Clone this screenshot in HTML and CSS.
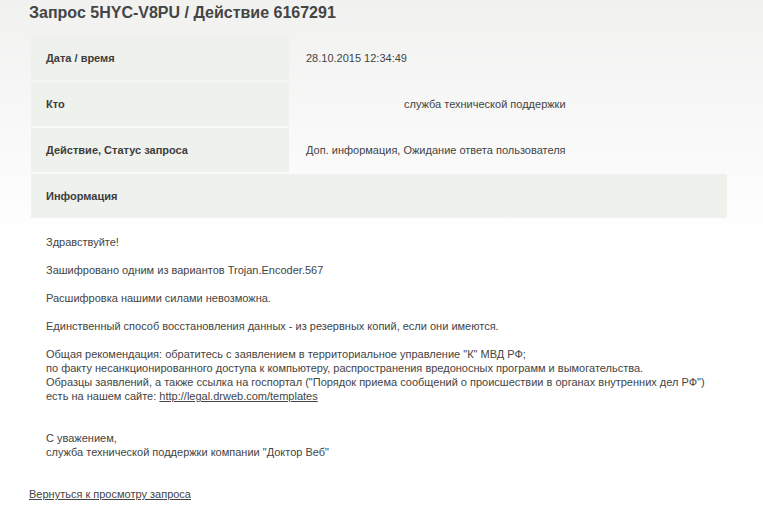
FILE: index.html
```html
<!DOCTYPE html>
<html lang="ru">
<head>
  <meta charset="UTF-8" />
  <title>Запрос 5HYC-V8PU / Действие 6167291</title>
  <link rel="stylesheet" href="styles.css">
</head>
<body>
  <div class="page">
    <h1 class="page-title">Запрос 5HYC-V8PU / Действие 6167291</h1>

    <table class="details">
      <tr>
        <th class="label">Дата / время</th>
        <td class="value">28.10.2015 12:34:49</td>
      </tr>
      <tr>
        <th class="label">Кто</th>
        <td class="value"><span class="who-name"></span>служба технической поддержки</td>
      </tr>
      <tr>
        <th class="label">Действие, Статус запроса</th>
        <td class="value">Доп. информация, Ожидание ответа пользователя</td>
      </tr>
      <tr>
        <th class="label" colspan="2">Информация</th>
      </tr>
      <tr>
        <!-- текст ответа службы поддержки -->
        <td class="message" colspan="2">
          Здравствуйте!<br><br>
          Зашифровано одним из вариантов Trojan.Encoder.567<br><br>
          Расшифровка нашими силами невозможна.<br><br>
          Единственный способ восстановления данных - из резервных копий, если они имеются.<br><br>
          Общая рекомендация: обратитесь с заявлением в территориальное управление "К" МВД РФ;<br>
          по факту несанкционированного доступа к компьютеру, распространения вредоносных программ и вымогательства.<br>
          Образцы заявлений, а также ссылка на госпортал ("Порядок приема сообщений о происшествии в органах внутренних дел РФ")<br>
          есть на нашем сайте: <a href="#">http://legal.drweb.com/templates</a><br><br><br>
          С уважением,<br>
          служба технической поддержки компании "Доктор Веб"
        </td>
      </tr>
    </table>

    <a class="back-link" href="#">Вернуться к просмотру запроса</a>
  </div>
</body>
</html>
```

FILE: styles.css
```css
/* общая страница */
body {
  margin: 0;
  font-family: "Liberation Sans", Arial, sans-serif;
  font-size: 11px;
  color: #444;
  background: linear-gradient(#f1f1f0 0, #fdfdfd 210px, #fff 240px) no-repeat;
  background-color: #fff;
  min-height: 519px;
}

.page {
  padding-left: 29px;
}

.page-title {
  margin: 0;
  padding-top: 4px;
  font-size: 16px;
  line-height: 18px;
  font-weight: bold;
  color: #454545;
  height: 30px;
}

/* таблица с данными запроса */
.details {
  width: 700px;
  border-spacing: 2px;
  border-collapse: separate;
}

.details th,
.details td {
  padding: 15px 15px;
  line-height: 14px;
  text-align: left;
  vertical-align: middle;
}

.label {
  width: 228px;
  background-color: #eff1ec;
  font-weight: bold;
  color: #3d3d3d;
}

.value {
  color: #444;
}

.who-name {
  display: inline-block;
  width: 98px;
}

.message {
  color: #444;
}

.message a,
.back-link {
  color: #444;
  text-decoration: underline;
}

.back-link {
  display: inline-block;
  margin-top: 11px;
  line-height: 14px;
}
```
